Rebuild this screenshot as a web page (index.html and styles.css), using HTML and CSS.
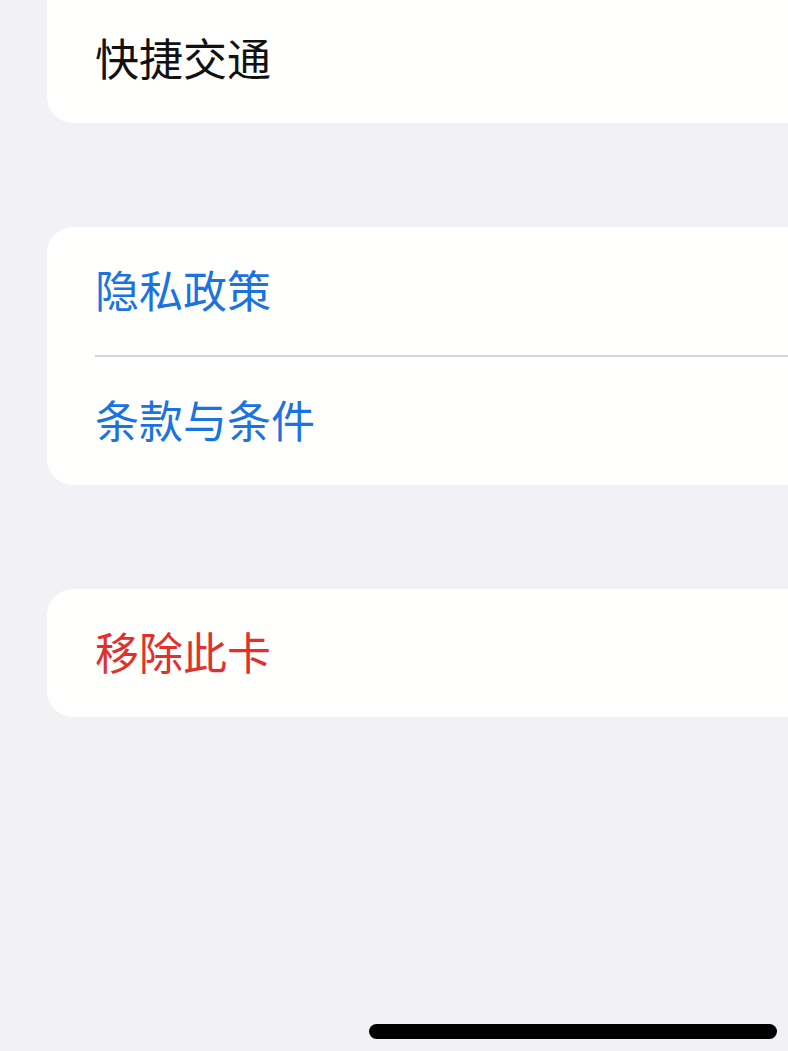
FILE: index.html
```html
<!DOCTYPE html>
<html lang="zh-CN">
<head>
<meta charset="utf-8">
<title>卡片设置</title>
<link rel="stylesheet" href="styles.css">
</head>
<body>
<main class="page">
  <section class="group group-first">
    <div class="row"><span class="label">快捷交通</span></div>
  </section>
  <section class="group">
    <div class="row"><span class="label link">隐私政策</span></div>
    <div class="row row-divided"><span class="label link">条款与条件</span></div>
  </section>
  <section class="group">
    <div class="row"><span class="label danger">移除此卡</span></div>
  </section>
</main>
<div class="home-indicator"></div>
</body>
</html>
```
FILE: styles.css
```css
html, body {
  margin: 0;
  padding: 0;
}
body {
  background: #f1f1f6;
  width: 788px;
  height: 1051px;
  overflow: hidden;
  position: relative;
  font-family: "Noto Sans CJK SC", "Noto Sans", sans-serif;
}
.page {
  display: flex;
  flex-direction: column;
  gap: 104px;
  padding-left: 47px;
}
.group {
  background: #fffffe;
  border-radius: 26px 0 0 26px;
}
.group-first {
  margin-top: -5px;
  border-radius: 0 0 0 26px;
}
.row {
  box-sizing: border-box;
  height: 128px;
  display: flex;
  align-items: center;
  padding-left: 48px;
  padding-bottom: 4px;
  position: relative;
}
.row-divided {
  height: 130px;
  padding-bottom: 2px;
}
.row-divided::before {
  content: "";
  position: absolute;
  top: 0;
  left: 48px;
  right: 0;
  height: 2px;
  background: #d6d6da;
}
.label {
  font-size: 44px;
  line-height: 1;
  color: #111;
  letter-spacing: 0;
}
.link {
  color: #1a73df;
}
.danger {
  color: #e0322c;
}
.home-indicator {
  position: absolute;
  left: 369px;
  bottom: 12px;
  width: 408px;
  height: 15px;
  border-radius: 8px;
  background: #000;
}
```
